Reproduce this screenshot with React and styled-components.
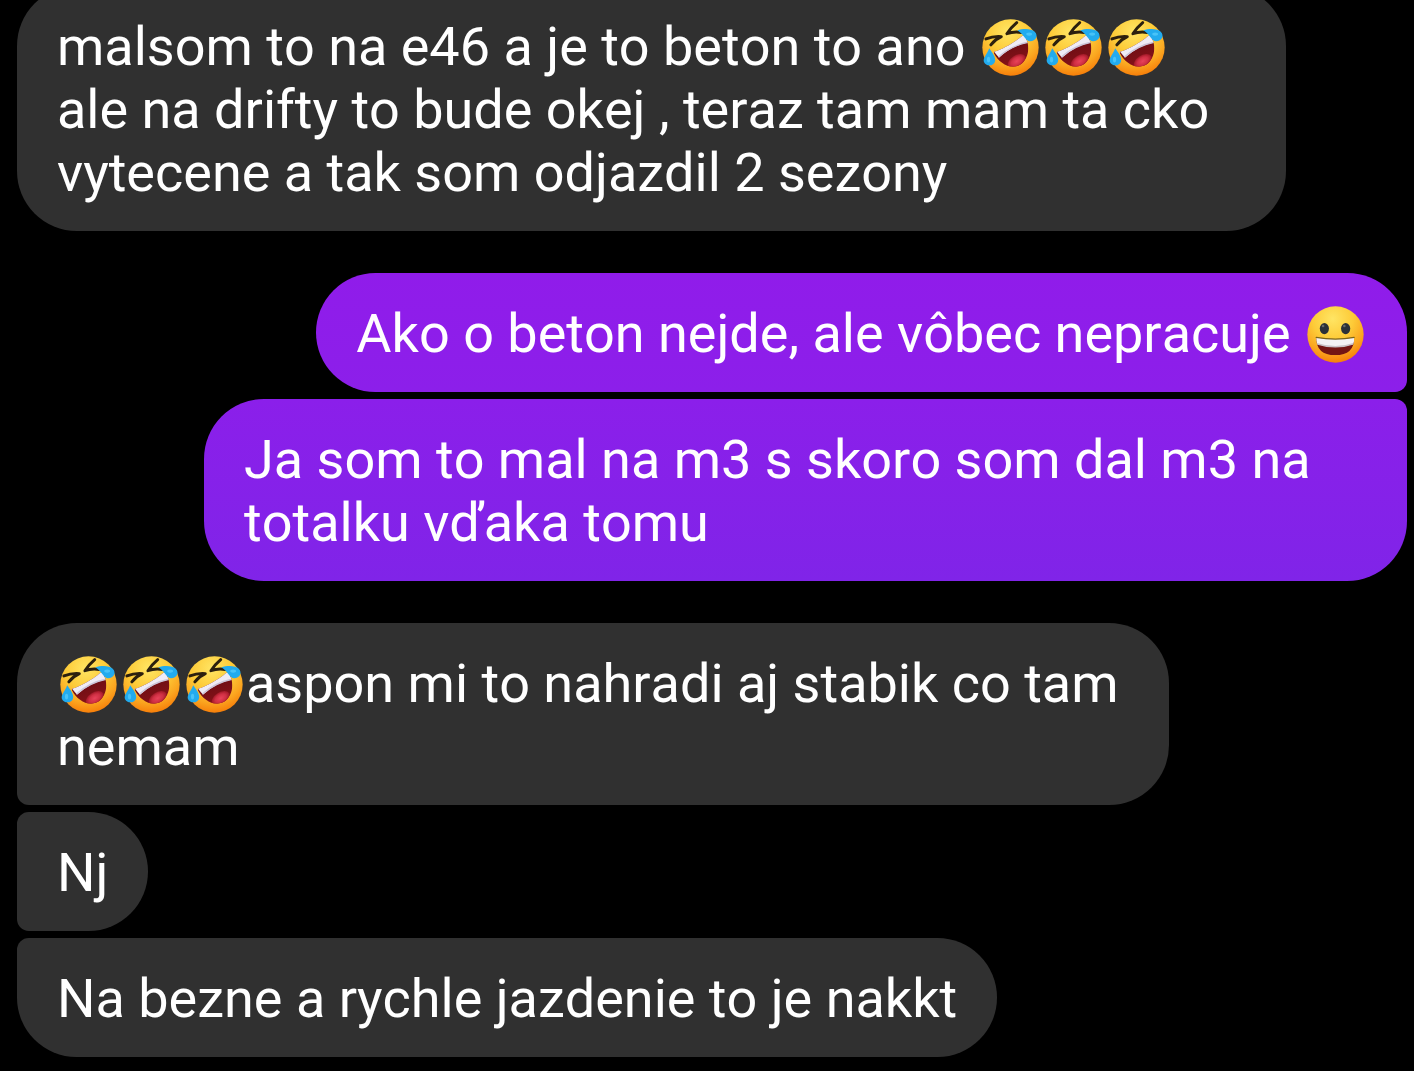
import { useId } from "react";
import styled, { createGlobalStyle } from "styled-components";

const GlobalStyle = createGlobalStyle`
  * {
    box-sizing: border-box;
  }
  body {
    margin: 0;
    background: #000;
  }
`
const Chat = styled.main`
  height: 100vh;
  padding: 0 7px 14px 17px;
  display: flex;
  flex-direction: column;
  justify-content: flex-end;
  gap: 42px;
  overflow: hidden;
  background: #000;
  color: #fff;
  font-family: Roboto, sans-serif;
  font-size: 54px;
  font-kerning: none;
  line-height: 63px;
`
const Group = styled.section`
  flex: none;
  display: flex;
  flex-direction: column;
  align-items: ${props=>props.$mine? "flex-end" : "flex-start"};
  gap: 7px;
`
const Bubble = styled.p`
  max-width: ${props=>props.$max || "1269px"};
  margin: 0;
  padding: 29px 40px 27px;
  border-radius: 60px;
  background: #303030;
`
const TheirBubble = styled(Bubble)`
  &:not(:first-child) {
    border-top-left-radius: 12px;
  }
  &:not(:last-child) {
    border-bottom-left-radius: 12px;
  }
`
const MyBubble = styled(Bubble)`
  background: linear-gradient(${props=>props.$from}, ${props=>props.$to});
  &:not(:first-child) {
    border-top-right-radius: 12px;
  }
  &:not(:last-child) {
    border-bottom-right-radius: 12px;
  }
`
const Emoji = styled.svg`
  width: 57px;
  height: 57px;
  margin: 0 3px;
  vertical-align: -11px;
  overflow: visible;
`

function FaceFill({id}){
  return(
    <radialGradient id={id} cx="0.45" cy="0.22" r="0.8">
      <stop offset="0" stopColor="#ffe564" />
      <stop offset="0.45" stopColor="#fdcb38" />
      <stop offset="0.75" stopColor="#fba620" />
      <stop offset="1" stopColor="#f67b08" />
    </radialGradient>
  )
}

function Rofl(){
  const id = useId();
  return(
    <Emoji viewBox="0 0 174 174" role="img" aria-label="🤣">
      <defs>
        <FaceFill id={id + "face"} />
        <linearGradient id={id + "mouth"} x1="0" y1="0" x2="0.4" y2="1">
          <stop offset="0" stopColor="#560b10" />
          <stop offset="1" stopColor="#8c1219" />
        </linearGradient>
        <radialGradient id={id + "tongue"}>
          <stop offset="0" stopColor="#e8425a" />
          <stop offset="0.6" stopColor="#cf2f43" />
          <stop offset="1" stopColor="#a01826" />
        </radialGradient>
        <clipPath id={id + "clip"}>
          <path d="M37 100C62 92 98 73 123 51Q128 48 132 54C149 84 142 122 116 140C86 156 52 134 37 105Q35 102 37 100Z" />
        </clipPath>
      </defs>
      <circle cx="87" cy="87" r="86" fill={`url(#${id}face)`} />
      <path d="M12 61Q35 52 59 54Q39 63 27 79" fill="none" stroke="#2c200e" strokeWidth="9" strokeLinecap="round" strokeLinejoin="round" />
      <path d="M106 11Q88 26 76 45Q97 37 120 41" fill="none" stroke="#2c200e" strokeWidth="9" strokeLinecap="round" strokeLinejoin="round" />
      <g clipPath={`url(#${id}clip)`}>
        <path d="M30 40H160V160H30Z" fill={`url(#${id}mouth)`} />
        <ellipse cx="106" cy="129" rx="30" ry="18" transform="rotate(-32 106 129)" fill={`url(#${id}tongue)`} />
        <path d="M30 92L128 44L140 72Q92 82 52 118Z" fill="#efecf6" />
        <path d="M50 116Q90 81 140 71" fill="none" stroke="#cbc4d8" strokeWidth="4" />
      </g>
      <path d="M22 89C32 103 42 116 40 128C37 145 12 146 6 131C2 119 15 108 22 89Z" fill="#22abee" />
      <path d="M108 34C125 29 151 28 161 39C173 51 164 68 147 68C132 66 129 47 108 34Z" fill="#22abee" />
      <ellipse cx="20" cy="124" rx="5" ry="9" fill="#48c3f8" />
      <ellipse cx="144" cy="46" rx="9" ry="5" fill="#48c3f8" />
    </Emoji>
  )
}

function Grin(){
  const id = useId();
  return(
    <Emoji viewBox="0 0 174 174" role="img" aria-label="😀">
      <defs>
        <FaceFill id={id + "face"} />
        <clipPath id={id + "clip"}>
          <path d="M28 96Q87 106 144 96Q145 150 86 150Q28 150 28 96Z" />
        </clipPath>
      </defs>
      <circle cx="87" cy="87" r="86" fill={`url(#${id}face)`} />
      <ellipse cx="53" cy="69" rx="14" ry="17" fill="#2b3038" />
      <ellipse cx="118" cy="69" rx="14" ry="17" fill="#2b3038" />
      <circle cx="49" cy="61" r="4" fill="#64676c" />
      <circle cx="114" cy="61" r="4" fill="#64676c" />
      <g clipPath={`url(#${id}clip)`}>
        <path d="M20 90H150V150H20Z" fill="#741514" />
        <path d="M24 90H148L142 116Q87 134 30 116Z" fill="#f3f1f4" />
        <path d="M30 115Q87 134 142 115" fill="none" stroke="#c9c2c7" strokeWidth="5" />
      </g>
      <path d="M28 96Q87 106 144 96" fill="none" stroke="#7c6416" strokeWidth="4" strokeLinecap="round" />
    </Emoji>
  )
}

function App(){
  return(
    <>
      <GlobalStyle />
      <Chat>
        <Group>
          <Bubble>malsom to na e46 a je to beton to ano <Rofl /><Rofl /><Rofl /> ale na drifty to bude okej , teraz tam mam ta cko vytecene a tak som odjazdil 2 sezony</Bubble>
        </Group>
        <Group $mine>
          <MyBubble $from="#901cea" $to="#8c1fea">Ako o beton nejde, ale vôbec nepracuje <Grin /></MyBubble>
          <MyBubble $max="1203px" $from="#8b1fea" $to="#8024e8">Ja som to mal na m3 s skoro som dal m3 na totalku vďaka tomu</MyBubble>
        </Group>
        <Group>
          <TheirBubble $max="1152px"><Rofl /><Rofl /><Rofl />aspon mi to nahradi aj stabik co tam nemam</TheirBubble>
          <TheirBubble>Nj</TheirBubble>
          <TheirBubble>Na bezne a rychle jazdenie to je nakkt</TheirBubble>
        </Group>
      </Chat>
    </>
  )
}
export default App;
